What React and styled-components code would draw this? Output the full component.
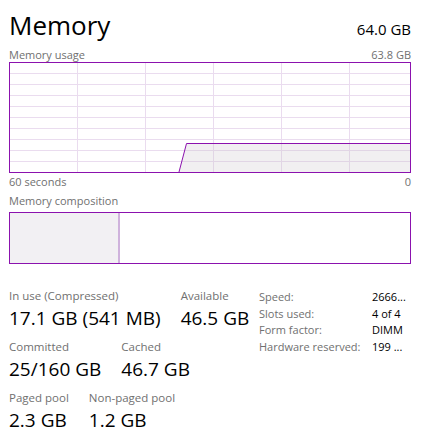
import { Fragment } from 'react'
import styled, { createGlobalStyle } from 'styled-components'

const GlobalStyle = createGlobalStyle`
  html, body {
    margin: 0;
    padding: 0;
    background: #ffffff;
  }
  body {
    font-family: "Open Sans", "Noto Sans", sans-serif;
    color: #000000;
  }
`

const PURPLE = '#8b12ae'

const Page = styled.div`
  width: 402px;
  margin-left: 9px;
  padding-top: 7px;
  display: flex;
  flex-direction: column;
`

const Header = styled.div`
  display: flex;
  justify-content: space-between;
  align-items: baseline;
  height: 40px;
`

const Title = styled.h1`
  margin: 0;
  font-size: 26px;
  font-weight: 400;
  line-height: 36px;
`

const Total = styled.span`
  font-size: 15px;
  line-height: 20px;
`

const CaptionRow = styled.div`
  display: flex;
  justify-content: space-between;
  font-size: 11px;
  line-height: 15px;
  color: #707070;
  margin-top: ${(p) => p.$top || 0}px;
  margin-bottom: ${(p) => p.$bottom || 0}px;
`

const GraphBox = styled.div`
  border: 1px solid ${PURPLE};
  height: ${(p) => p.$height}px;
  box-sizing: border-box;
  overflow: hidden;
`

const Composition = styled(GraphBox)`
  display: flex;
`

const InUseBlock = styled.div`
  width: 108px;
  background: #f2f0f3;
  border-right: 2px solid #cfb2dc;
`

const Details = styled.div`
  display: flex;
  align-items: flex-start;
  margin-top: 23px;
`

const StatsCol = styled.div`
  width: 250px;
  display: flex;
  flex-direction: column;
  gap: 8px;
`

const StatRow = styled.div`
  display: flex;
  gap: 20px;
`

const Stat = styled.div`
  display: flex;
  flex-direction: column;
`

const StatLabel = styled.span`
  font-size: 11.5px;
  line-height: 17px;
  color: #707070;
  white-space: nowrap;
`

const StatValue = styled.span`
  font-size: 19px;
  line-height: 24px;
  padding-top: 2px;
  white-space: nowrap;
`

const InfoGrid = styled.div`
  display: grid;
  grid-template-columns: 113px auto;
  margin-top: 2px;
  font-size: 11px;
  line-height: 16.5px;
`

const InfoLabel = styled.span`
  color: #707070;
  white-space: nowrap;
`

const InfoValue = styled.span`
  color: #000000;
  white-space: nowrap;
`

const UsageChart = () => {
  const w = 400
  const h = 109
  const cols = [68, 136, 204, 272, 340]
  const rows = Array.from({ length: 9 }, (_, i) => (i + 1) * 11)
  return (
    <svg width={w} height={h} viewBox={`0 0 ${w} ${h}`} style={{ display: 'block' }}>
      {rows.map((y) => (
        <line key={'r' + y} x1="0" x2={w} y1={y - 0.5} y2={y - 0.5} stroke="#eadcef" strokeWidth="1" />
      ))}
      {cols.map((x) => (
        <line key={'c' + x} x1={x - 0.5} x2={x - 0.5} y1="0" y2={h} stroke="#eadcef" strokeWidth="1" />
      ))}
      <polygon points={`169,${h} 176.5,80.5 ${w},80.5 ${w},${h}`} fill="rgba(200,190,200,0.25)" />
      <polyline
        points={`169,${h} 176.5,80.5 ${w},80.5`}
        fill="none"
        stroke={PURPLE}
        strokeWidth="1"
      />
    </svg>
  )
}

const info = [
  ['Speed:', '2666...'],
  ['Slots used:', '4 of 4'],
  ['Form factor:', 'DIMM'],
  ['Hardware reserved:', '199 ...'],
]

export default function App() {
  return (
    <>
      <GlobalStyle />
      <Page>
        <Header>
          <Title>Memory</Title>
          <Total>64.0 GB</Total>
        </Header>
        <CaptionRow>
          <span>Memory usage</span>
          <span>63.8 GB</span>
        </CaptionRow>
        <GraphBox $height={111}>
          <UsageChart />
        </GraphBox>
        <CaptionRow $top={1}>
          <span>60 seconds</span>
          <span>0</span>
        </CaptionRow>
        <CaptionRow $top={4} $bottom={4}>
          <span>Memory composition</span>
        </CaptionRow>
        <Composition $height={52}>
          <InUseBlock />
        </Composition>
        <Details>
          <StatsCol>
            <StatRow>
              <Stat>
                <StatLabel>In use (Compressed)</StatLabel>
                <StatValue>17.1 GB (541 MB)</StatValue>
              </Stat>
              <Stat>
                <StatLabel>Available</StatLabel>
                <StatValue>46.5 GB</StatValue>
              </Stat>
            </StatRow>
            <StatRow>
              <Stat>
                <StatLabel>Committed</StatLabel>
                <StatValue>25/160 GB</StatValue>
              </Stat>
              <Stat>
                <StatLabel>Cached</StatLabel>
                <StatValue>46.7 GB</StatValue>
              </Stat>
            </StatRow>
            <StatRow>
              <Stat>
                <StatLabel>Paged pool</StatLabel>
                <StatValue>2.3 GB</StatValue>
              </Stat>
              <Stat>
                <StatLabel>Non-paged pool</StatLabel>
                <StatValue>1.2 GB</StatValue>
              </Stat>
            </StatRow>
          </StatsCol>
          <InfoGrid>
            {info.map(([k, v]) => (
              <Fragment key={k}>
                <InfoLabel>{k}</InfoLabel>
                <InfoValue>{v}</InfoValue>
              </Fragment>
            ))}
          </InfoGrid>
        </Details>
      </Page>
    </>
  )
}
